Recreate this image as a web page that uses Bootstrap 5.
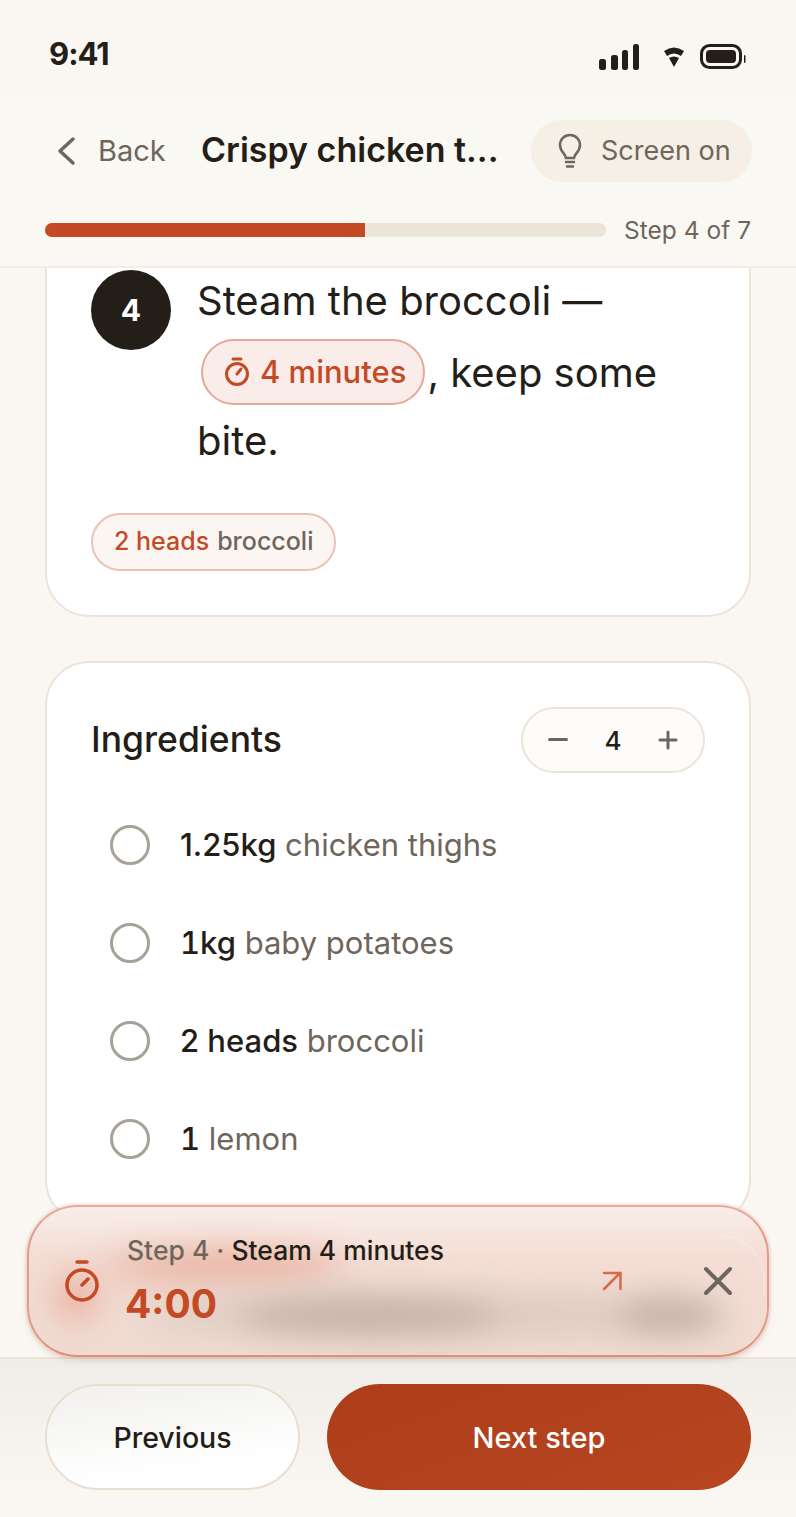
<!doctype html>
<html lang="en">
<head>
    <meta charset="utf-8">
    <meta name="viewport" content="width=device-width, initial-scale=1">
    <title>Cooking step</title>
    <link href="https://cdn.jsdelivr.net/npm/bootstrap@5.3.3/dist/css/bootstrap.min.css" rel="stylesheet">
    <style>
        html, body { height: 100%; }
        body {
            background: #faf7f2;
            color: #231e18;
            font-family: "Inter", "Liberation Sans", sans-serif;
            overflow: hidden;
        }
        .phone { width: 796px; height: 1517px; }
        .status-bar { height: 100px; padding: 12px 50px 0 49px; background: #faf7f2; }
        .clock { font-size: 31px; font-weight: 700; letter-spacing: -1px; margin-top: -4px; }
        .top-head { background: #faf8f3; border-bottom: 2px solid #f2eee7; height: 168px; }
        .nav-row { padding: 20px 44px 0 55px; height: 82px; }
        .back-link { color: #6e665c; font-size: 29px; width: 146px; gap: 21px; }
        .recipe-title { font-size: 34px; font-weight: 600; white-space: nowrap; width: 330px; margin-top: -3px; }
        .screen-pill { background: #f5efe5; color: #6e665c; font-size: 27px; height: 62px; width: 221px; border-radius: 31px; padding-left: 26px; gap: 18px; }
        .progress-row { padding: 0 45px; margin-top: 30px; }
        .track { width: 561px; height: 14px; background: #ece4d8; border-radius: 7px; overflow: hidden; }
        .track-fill { height: 100%; background: #c44a26; }
        .step-of { color: #6e665c; font-size: 24.5px; margin-left: auto; }
        .scroll-area { flex: 1; overflow: hidden; padding: 0 45px; }
        .panel { background: #fff; border: 2px solid #ece4d8; border-radius: 44px; }
        .step-panel { margin-top: -42px; height: 391px; padding: 42px 44px 0; margin-bottom: 44px; }
        .step-num { width: 80px; height: 80px; background: #231e18; color: #fff; font-weight: 700; font-size: 30px; border-radius: 50%; flex: none; margin-right: 26px; }
        .step-text { font-size: 40px; line-height: 68px; margin-top: -3px; }
        .time-chip { display: inline-flex; align-items: center; gap: 10px; height: 66px; padding: 0 17px 0 21px; border: 2px solid #e6a899; border-radius: 33px; background: #faece8; color: #c44a26; font-size: 31px; font-weight: 500; margin: 4px 2px 0 4px; }
        .amount-chip { height: 58px; padding: 0 21px; border: 2px solid #ecc2b6; border-radius: 29px; background: #fcf6f3; color: #6e665c; font-size: 25px; font-weight: 500; margin-top: 38px; }
        .amount-chip b { color: #c44a26; font-weight: 500; }
        .ingredients-panel { height: 563px; padding: 44px 44px 0; }
        .panel-title { font-size: 35.5px; font-weight: 500; }
        .stepper { width: 184px; height: 66px; border: 2px solid #ece4d8; border-radius: 33px; background: #fefcfb; padding: 0 25px; font-size: 26px; font-weight: 500; }
        .ingredient-list { margin-top: 23px; }
        .ingredient-row { height: 98px; padding-left: 19px; font-size: 31px; color: #6e665c; }
        .ingredient-row strong { color: #231e18; font-weight: 500; }
        .ingredient-row strong.wide-one { font-variant-numeric: tabular-nums; }
        .tick { width: 40px; height: 40px; border: 3px solid #a8a198; border-radius: 50%; margin-right: 30px; flex: none; }
        .timer-bar { position: absolute; left: 27px; top: 1205px; width: 742px; height: 152px; border-radius: 50px; border: 2px solid #e39b88; border-bottom-color: #df8f79; border-top-color: #e8aa9a; background: linear-gradient(#f9eeea, #f3ddd4 35%, #f0dbd1); box-shadow: 0 0 0 2px rgba(232, 170, 154, .18), 0 3px 6px rgba(120, 60, 40, .18); overflow: hidden; padding: 0 34px 0 35px; }
        .smudge { position: absolute; border-radius: 50%; }
        .smudge-grey { background: #c6b4a9; height: 34px; top: 92px; filter: blur(14px); }
        .smudge-soft { background: #dccbc1; height: 44px; top: 86px; filter: blur(16px); }
        .smudge-red { background: #eab3a3; filter: blur(16px); }
        .edge-glint { position: absolute; right: 2px; top: 28px; width: 44px; height: 60px; border-top: 2px solid rgba(255, 255, 255, .18); border-right: 2px solid rgba(255, 255, 255, .18); border-top-right-radius: 44px; }
        .timer-copy { margin-left: 27px; position: relative; }
        .timer-label { font-size: 26.5px; font-weight: 500; color: #6e665c; line-height: 34px; }
        .timer-label span { color: #231e18; }
        .timer-count { font-size: 39px; font-weight: 700; color: #c44a26; line-height: 52px; margin: 11px 0 0 -2px; }
        .timer-icons { position: relative; margin-left: auto; gap: 81px; }
        .foot-bar { height: 160px; background: linear-gradient(#f0ede8, #faf7f2 85%); border-top: 2px solid #ece4d8; padding: 25px 45px 0; gap: 27px; }
        .btn-prev, .btn-next { height: 106px; border-radius: 53px; font-weight: 500; padding-top: 8px; }
        .btn-prev { width: 255px; border: 2px solid #e8dfd1; background: linear-gradient(172deg, #f1f0ed, #fff 75%); color: #231e18; font-size: 28.5px; }
        .btn-next { flex: 1; border: 0; background: linear-gradient(160deg, #ae3e1a, #b64520); color: #fff; font-size: 29px; }
    </style>
</head>
<body>
    <div class="phone d-flex flex-column position-relative">
        <div class="status-bar d-flex justify-content-between align-items-center">
            <div class="clock">9:41</div>
            <svg width="148" height="32" viewBox="0 0 148 32" fill="#231e18">
                <rect x="1" y="19" width="7" height="11" rx="2.5"/><rect x="13" y="15" width="7" height="15" rx="2.5"/><rect x="24" y="10" width="6" height="20" rx="2.5"/><rect x="35" y="4" width="6" height="26" rx="2.5"/>
                <path d="M66 11q10-7 20 0l-3 5q-7-5-14 0zM71 18q5-3 10 0l-5 9z"/>
                <rect x="103.500" y="5.500" width="39" height="22" rx="8" fill="none" stroke="#231e18" stroke-width="3"/><rect x="108" y="10" width="30" height="13" rx="4"/><rect x="146" y="15" width="1.500" height="8" rx="0.7"/>
            </svg>
        </div>
        <div class="top-head">
            <div class="nav-row d-flex align-items-center">
                <div class="back-link d-flex align-items-center">
                    <svg width="22" height="30" viewBox="0 0 22 30" fill="none" stroke="#6e665c" stroke-width="3.5" stroke-linecap="round" stroke-linejoin="round"><path d="M18 3 5 15l13 12"/></svg>
                    <span>Back</span>
                </div>
                <div class="recipe-title">Crispy chicken t...</div>
                <div class="screen-pill d-flex align-items-center">
                    <svg width="26" height="36" viewBox="0 0 26 36" fill="none" stroke="#6e665c" stroke-width="2.500" stroke-linecap="round"><path d="M9 25c0-4-6-6-6-13a10 10 0 0 1 20 0c0 7-6 9-6 13z"/><path d="M9 29h8M10 33.500h6"/></svg>
                    <span>Screen on</span>
                </div>
            </div>
            <div class="progress-row d-flex align-items-center">
                <div class="track"><div class="track-fill" style="width: 57.1%"></div></div>
                <div class="step-of">Step 4 of 7</div>
            </div>
        </div>
        <div class="scroll-area">
            <div class="panel step-panel">
                <div class="d-flex">
                    <div class="step-num d-flex align-items-center justify-content-center">4</div>
                    <div class="step-text">Steam the broccoli —<br>
                        <span class="time-chip">
                            <svg width="26" height="30" viewBox="0 0 26 30" fill="none" stroke="#c44a26" stroke-width="3" stroke-linecap="round"><path d="M9 2h8M13 17l4-5"/><circle cx="13" cy="17" r="10.5"/></svg>
                            4 minutes</span>, keep some<br>bite.
                    </div>
                </div>
                <div class="amount-chip d-inline-flex align-items-center gap-2"><b>2 heads</b> broccoli</div>
            </div>
            <div class="panel ingredients-panel">
                <div class="d-flex justify-content-between align-items-center">
                    <div class="panel-title">Ingredients</div>
                    <div class="stepper d-flex justify-content-between align-items-center">
                        <svg width="20" height="4" viewBox="0 0 20 4"><rect width="20" height="3" rx="1.5" fill="#6e665c"/></svg>
                        <span>4</span>
                        <svg width="20" height="20" viewBox="0 0 20 20" fill="none" stroke="#6e665c" stroke-width="3" stroke-linecap="round"><path d="M2 10h16M10 2v16"/></svg>
                    </div>
                </div>
                <div class="ingredient-list">
                    <div class="ingredient-row d-flex align-items-center"><div class="tick"></div><div><strong>1.25kg</strong> chicken thighs</div></div>
                    <div class="ingredient-row d-flex align-items-center"><div class="tick"></div><div><strong class="wide-one">1kg</strong> baby potatoes</div></div>
                    <div class="ingredient-row d-flex align-items-center"><div class="tick"></div><div><strong>2 heads</strong> broccoli</div></div>
                    <div class="ingredient-row d-flex align-items-center"><div class="tick"></div><div><strong class="wide-one">1</strong> lemon</div></div>
                </div>
            </div>
        </div>
        <div class="foot-bar d-flex">
            <button class="btn btn-prev">Previous</button>
            <button class="btn btn-next">Next step</button>
        </div>
        <div class="timer-bar d-flex align-items-center">
            <div class="smudge smudge-red" style="left:75px;top:42px;width:240px;height:34px"></div>
            <div class="smudge smudge-red" style="left:25px;top:65px;width:45px;height:50px"></div>
            <div class="smudge smudge-soft" style="left:110px;width:590px"></div>
            <div class="smudge smudge-grey" style="left:210px;width:260px"></div>
            <div class="smudge smudge-grey" style="left:590px;width:100px"></div>
            <div class="edge-glint"></div>
            <svg class="position-relative" width="36" height="42" viewBox="0 0 36 42" fill="none" stroke="#c44a26" stroke-width="3.500" stroke-linecap="round"><path d="M13 2h10M18 25l6-6"/><circle cx="18" cy="25" r="15"/></svg>
            <div class="timer-copy">
                <div class="timer-label">Step 4 · <span>Steam 4 minutes</span></div>
                <div class="timer-count">4:00</div>
            </div>
            <div class="timer-icons d-flex align-items-center">
                <svg width="20" height="20" viewBox="0 0 20 20" fill="none" stroke="#d9694a" stroke-width="2.500" stroke-linecap="round"><path d="M2 18 18 2M2 2h16.500v16"/></svg>
                <svg width="30" height="30" viewBox="0 0 30 30" fill="none" stroke="#6e665c" stroke-width="4" stroke-linecap="round"><path d="M3 3l24 24M27 3 3 27"/></svg>
            </div>
        </div>
    </div>
    <script src="https://cdn.jsdelivr.net/npm/bootstrap@5.3.3/dist/js/bootstrap.bundle.min.js"></script>
</body>
</html>
